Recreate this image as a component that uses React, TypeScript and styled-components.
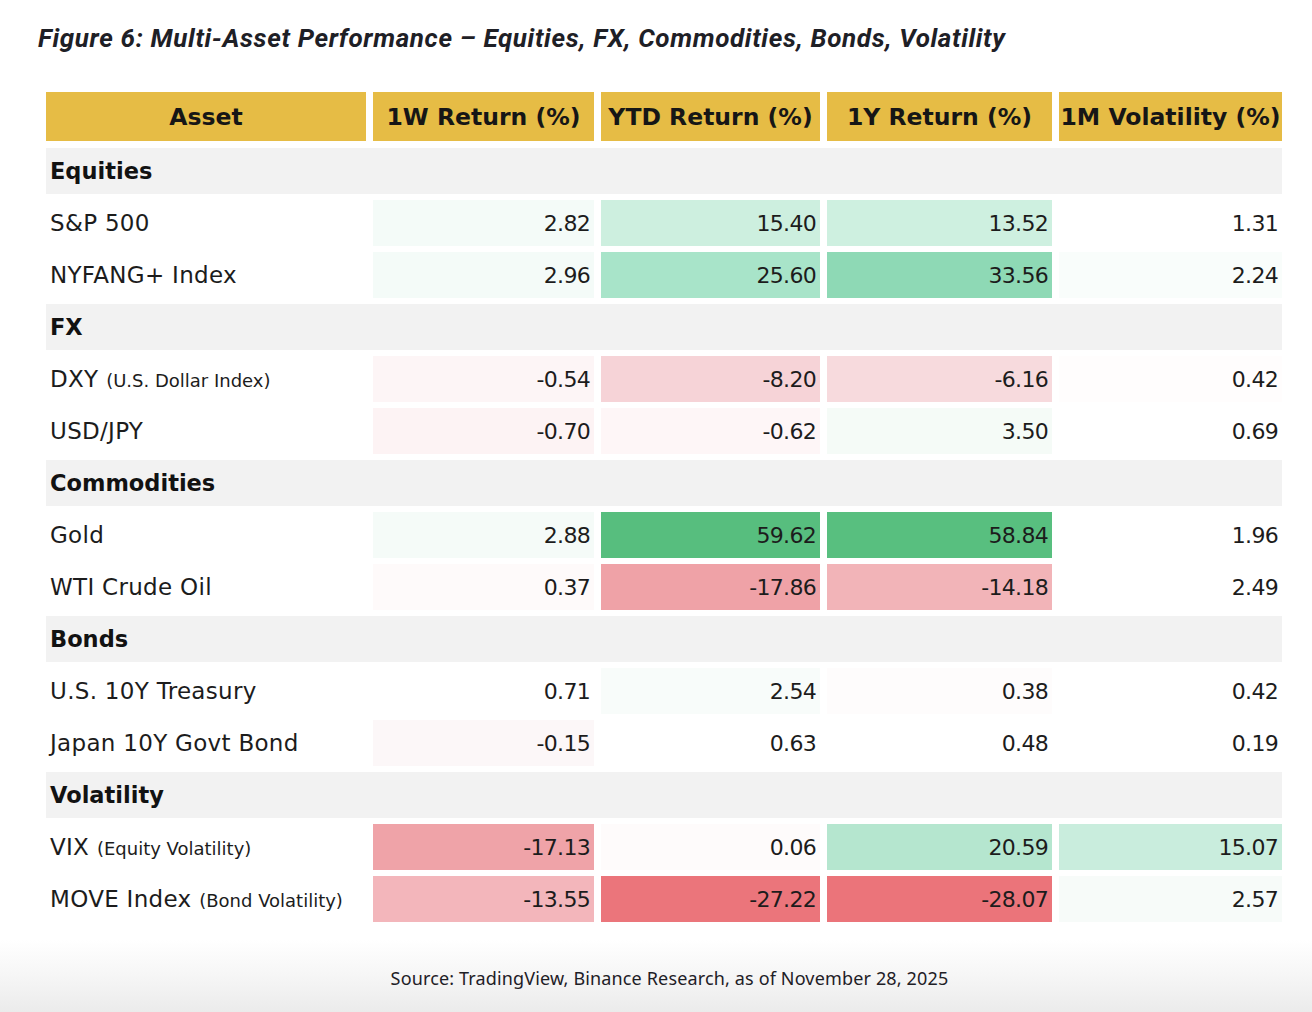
import React from "react";
import styled, { createGlobalStyle } from "styled-components";

const GlobalStyle = createGlobalStyle`
  html, body {
    margin: 0;
    padding: 0;
    background: #ffffff;
  }
  body {
    font-family: "DejaVu Sans", "Inter", sans-serif;
    color: #1c1c1c;
  }
`;

type Cell = { v: string; bg: string };
type Row = { name: string; note?: string; cells: Cell[] };
type Group = { title: string; rows: Row[] };

const c = (v: string, bg: string): Cell => ({ v, bg });

const HEADERS = ["Asset", "1W Return (%)", "YTD Return (%)", "1Y Return (%)", "1M Volatility (%)"];

const GROUPS: Group[] = [
  {
    title: "Equities",
    rows: [
      { name: "S&P 500", cells: [c("2.82", "#f4fbf8"), c("15.40", "#cdefdf"), c("13.52", "#cef0e0"), c("1.31", "#ffffff")] },
      { name: "NYFANG+ Index", cells: [c("2.96", "#f4fbf8"), c("25.60", "#a8e4c9"), c("33.56", "#8ed9b5"), c("2.24", "#f9fdfb")] },
    ],
  },
  {
    title: "FX",
    rows: [
      { name: "DXY", note: "(U.S. Dollar Index)", cells: [c("-0.54", "#fdf5f6"), c("-8.20", "#f6d3d7"), c("-6.16", "#f7dadd"), c("0.42", "#fffdfd")] },
      { name: "USD/JPY", cells: [c("-0.70", "#fdf3f4"), c("-0.62", "#fef6f7"), c("3.50", "#f5fbf7"), c("0.69", "#ffffff")] },
    ],
  },
  {
    title: "Commodities",
    rows: [
      { name: "Gold", cells: [c("2.88", "#f5fbf8"), c("59.62", "#57be7e"), c("58.84", "#58bf7f"), c("1.96", "#ffffff")] },
      { name: "WTI Crude Oil", cells: [c("0.37", "#fefafa"), c("-17.86", "#efa2a7"), c("-14.18", "#f2b4b8"), c("2.49", "#ffffff")] },
    ],
  },
  {
    title: "Bonds",
    rows: [
      { name: "U.S. 10Y Treasury", cells: [c("0.71", "#ffffff"), c("2.54", "#f8fcfa"), c("0.38", "#fefcfc"), c("0.42", "#ffffff")] },
      { name: "Japan 10Y Govt Bond", cells: [c("-0.15", "#fcf7f8"), c("0.63", "#ffffff"), c("0.48", "#ffffff"), c("0.19", "#ffffff")] },
    ],
  },
  {
    title: "Volatility",
    rows: [
      { name: "VIX", note: "(Equity Volatility)", cells: [c("-17.13", "#efa3a8"), c("0.06", "#fefbfb"), c("20.59", "#b5e6cf"), c("15.07", "#c9eddd")] },
      { name: "MOVE Index", note: "(Bond Volatility)", cells: [c("-13.55", "#f3b6bb"), c("-27.22", "#eb757b"), c("-28.07", "#eb747a"), c("2.57", "#f7fbf9")] },
    ],
  },
];

const Page = styled.div`
  position: relative;
  width: 1312px;
  height: 1012px;
  overflow: hidden;
  display: flex;
  flex-direction: column;
  background: linear-gradient(
    to bottom,
    #ffffff 0px,
    #ffffff 940px,
    #f6f6f6 975px,
    #ebebeb 1012px
  );
`;

const Title = styled.h1`
  margin: 0;
  padding: 20px 0 0 38px;
  height: 52px;
  box-sizing: border-box;
  font-family: "Roboto", "Noto Sans", sans-serif;
  font-style: italic;
  font-weight: 700;
  font-size: 26px;
  line-height: 36px;
  letter-spacing: 0.64px;
  color: #1e2026;
  white-space: nowrap;
`;

const Table = styled.div`
  margin: 40px 0 0 46px;
  width: 1236px;
  display: grid;
  grid-template-columns: 320px 221px 219px 225px 223px;
  grid-template-rows: 50px;
  grid-auto-rows: 46px;
  column-gap: 7px;
  row-gap: 6px;
`;

const HeadCell = styled.div`
  align-self: start;
  height: 49px;
  background: #e6bc45;
  display: flex;
  align-items: center;
  justify-content: center;
  font-weight: 700;
  font-size: 23.5px;
  letter-spacing: 0px;
  color: #161616;
  white-space: nowrap;
`;

const GroupRow = styled.div`
  grid-column: 1 / -1;
  background: #f2f2f2;
  display: flex;
  align-items: center;
  padding-left: 4px;
  font-weight: 700;
  font-size: 22.5px;
  color: #121212;
`;

const NameCell = styled.div`
  display: flex;
  align-items: center;
  padding-left: 4px;
  font-size: 23px;
  font-weight: 400;
  letter-spacing: 0.3px;
  color: #1c1c1c;
  white-space: nowrap;
`;

const Note = styled.span`
  font-size: 18px;
  letter-spacing: 0px;
  margin-left: 2px;
`;

const ValueCell = styled.div<{ $bg: string }>`
  background: ${(p) => p.$bg};
  display: flex;
  align-items: center;
  justify-content: flex-end;
  padding-right: 4px;
  font-size: 22px;
  font-weight: 400;
  letter-spacing: -0.7px;
  color: #1c1c1c;
`;

const Source = styled.div`
  position: absolute;
  left: 27px;
  right: 0;
  top: 966px;
  text-align: center;
  font-family: "Noto Sans", "Roboto", sans-serif;
  font-size: 18px;
  line-height: 24px;
  letter-spacing: 0.15px;
  color: #1e2026;
`;

export default function App() {
  return (
    <>
      <GlobalStyle />
      <Page>
        <Title>Figure 6: Multi-Asset Performance – Equities, FX, Commodities, Bonds, Volatility</Title>
        <Table>
          {HEADERS.map((h) => (
            <HeadCell key={h}>{h}</HeadCell>
          ))}
          {GROUPS.map((g) => (
            <React.Fragment key={g.title}>
              <GroupRow>{g.title}</GroupRow>
              {g.rows.map((r) => (
                <React.Fragment key={r.name}>
                  <NameCell>
                    <span>
                      {r.name}
                      {r.note && <Note> {r.note}</Note>}
                    </span>
                  </NameCell>
                  {r.cells.map((cell, i) => (
                    <ValueCell key={i} $bg={cell.bg}>
                      {cell.v}
                    </ValueCell>
                  ))}
                </React.Fragment>
              ))}
            </React.Fragment>
          ))}
        </Table>
        <Source>Source: TradingView, Binance Research, as of November 28, 2025</Source>
      </Page>
    </>
  );
}
